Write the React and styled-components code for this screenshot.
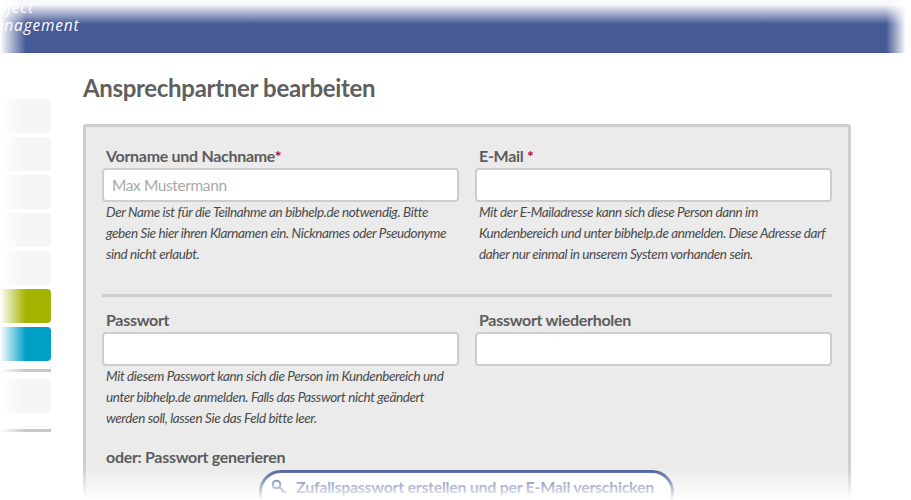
import React from "react";
import styled, { createGlobalStyle } from "styled-components";

const Global = createGlobalStyle`
  html, body { margin: 0; padding: 0; background: #fff; }
  body { width: 911px; height: 500px; overflow: hidden; font-family: "Lato", "Noto Sans", sans-serif; color: #5c5c5c; }
  * { box-sizing: border-box; }
`;
const Page = styled.div`
  position: relative; width: 911px; height: 500px; overflow: hidden;
`;
const Header = styled.header`
  height: 53px; width: 905px; background: #455a97; border-bottom: 1px solid #3d4f86;
  display: flex; justify-content: space-between; overflow: hidden; color: #fff;
`;
const Logo = styled.div`
  margin: -2px 0 0 -19px; font-family: "Open Sans", sans-serif; font-size: 15.5px; line-height: 18px; font-style: italic; letter-spacing: 0.8px;
`;
const Body = styled.div`
  display: flex; align-items: flex-start;
`;
const Sidebar = styled.nav`
  width: 51px; margin-top: 46px; display: flex; flex-direction: column; gap: 4px; flex: none;
`;
const Tile = styled.div`
  height: 34px; border-radius: 0 4px 4px 0; background: ${p => p.$color || "#f5f5f5"};
`;
const Rule = styled.div`
  height: 3px; background: #c8c8c8; margin: ${p => p.$m};
`;
const Main = styled.main`
  margin-left: 32px; width: 768px; flex: none;
`;
const Title = styled.h1`
  margin: 20px 0 0; font-size: 24px; line-height: 30px; font-weight: 700; color: #5f5f5f; letter-spacing: -0.32px;
`;
const Panel = styled.section`
  margin-top: 21px; padding: 17px 16px 40px; height: 400px; background: #ebebeb; border: 3px solid #cfcfcf; border-radius: 3px;
`;
const Grid = styled.div`
  display: grid; grid-template-columns: 357px 357px; column-gap: 16px;
`;
const Field = styled.div``;
const Label = styled.label`
  display: block; padding-left: 4px; font-size: 16px; line-height: 24px; font-weight: 700; color: #5c5c5c; letter-spacing: -0.3px;
`;
const Star = styled.span`color: #a3161f;`;
const Input = styled.input`
  display: block; width: 357px; height: 34px; margin-top: 0; padding: 0 8px; background: #fff; border: 2px solid #cdcdcd; border-radius: 4px;
  font: 400 15.5px "Lato", sans-serif; letter-spacing: -0.4px; color: #555; outline: none;
  &::placeholder { color: #a9a9a9; opacity: 1; }
`;
const Hint = styled.p`
  margin: 0; padding: 0 4px; font-size: 13.5px; line-height: 21px; font-style: italic; color: #4a4a4a; letter-spacing: -0.38px;
`;
const Divider = styled.hr`
  height: 3px; border: 0; margin: 29px 0 11px; background: #cdcdcd; width: 730px;
`;
const SubLabel = styled(Label)`margin-top: 16px;`;
const ButtonRow = styled.div`
  display: flex; justify-content: center; margin-top: 1px;
`;
const Generate = styled.button`
  width: 415px; height: 44px; margin-left: -1px; display: flex; align-items: flex-start; justify-content: center; gap: 9px; padding: 4px 8px 0 0;
  background: #fff; border: 3px solid #455a97; border-radius: 22px; color: #455a97; white-space: nowrap;
  font: 700 16px "Lato", sans-serif; letter-spacing: -0.3px;
`;
const KeyGlyph = styled.svg`
  flex: none; margin-top: 2px;
`;
const Fade = styled.div`
  position: absolute; pointer-events: none;
  ${p => p.$css}
`;
const KeyIcon = () => (
  <KeyGlyph width="16" height="16" viewBox="0 0 16 16" fill="none" stroke="currentColor" strokeWidth="2">
    <circle cx="5.5" cy="5.5" r="3.8" />
    <path d="M8.5 8.5 15 14M12.3 11.7l-1.7 1.7" />
  </KeyGlyph>
);

export default function App() {
  return (
    <Page>
      <Global />
      <Header>
        <Logo>
          <div>Project</div>
          <div>Management</div>
        </Logo>
      </Header>
      <Body>
        <Sidebar>
          <Tile /><Tile /><Tile /><Tile /><Tile />
          <Tile $color="#a3b300" />
          <Tile $color="#009fc6" />
          <Rule $m="4px 0 3px" />
          <Tile />
          <Rule $m="12px 0 0" />
        </Sidebar>
        <Main>
          <Title>Ansprechpartner bearbeiten</Title>
          <Panel>
            <Grid>
              <Field>
                <Label>Vorname und Nachname<Star>*</Star></Label>
                <Input placeholder="Max Mustermann" />
                <Hint>Der Name ist für die Teilnahme an bibhelp.de notwendig. Bitte geben Sie hier ihren Klarnamen ein. Nicknames oder Pseudonyme sind nicht erlaubt.</Hint>
              </Field>
              <Field>
                <Label>E-Mail <Star>*</Star></Label>
                <Input />
                <Hint>Mit der E-Mailadresse kann sich diese Person dann im Kundenbereich und unter bibhelp.de anmelden. Diese Adresse darf daher nur einmal in unserem System vorhanden sein.</Hint>
              </Field>
            </Grid>
            <Divider />
            <Grid>
              <Field>
                <Label>Passwort</Label>
                <Input />
                <Hint>Mit diesem Passwort kann sich die Person im Kundenbereich und unter bibhelp.de anmelden. Falls das Passwort nicht geändert werden soll, lassen Sie das Feld bitte leer.</Hint>
              </Field>
              <Field>
                <Label>Passwort wiederholen</Label>
                <Input />
              </Field>
            </Grid>
            <SubLabel>oder: Passwort generieren</SubLabel>
            <ButtonRow>
              <Generate><KeyIcon />Zufallspasswort erstellen und per E-Mail verschicken</Generate>
            </ButtonRow>
          </Panel>
        </Main>
      </Body>
      <Fade $css="left:0;top:0;width:911px;height:24px;background:linear-gradient(to bottom,rgba(255,255,255,.96) 18%,rgba(255,255,255,0) 100%);" />
      <Fade $css="left:0;top:0;width:26px;height:500px;background:linear-gradient(to right,#fff 0%,rgba(255,255,255,0) 100%);" />
      <Fade $css="left:886px;top:0;width:25px;height:54px;background:linear-gradient(to right,rgba(255,255,255,0) 0%,#fff 80%);" />
      <Fade $css="left:0;top:468px;width:911px;height:32px;background:linear-gradient(to bottom,rgba(255,255,255,0) 0%,#fff 100%);" />
    </Page>
  );
}
